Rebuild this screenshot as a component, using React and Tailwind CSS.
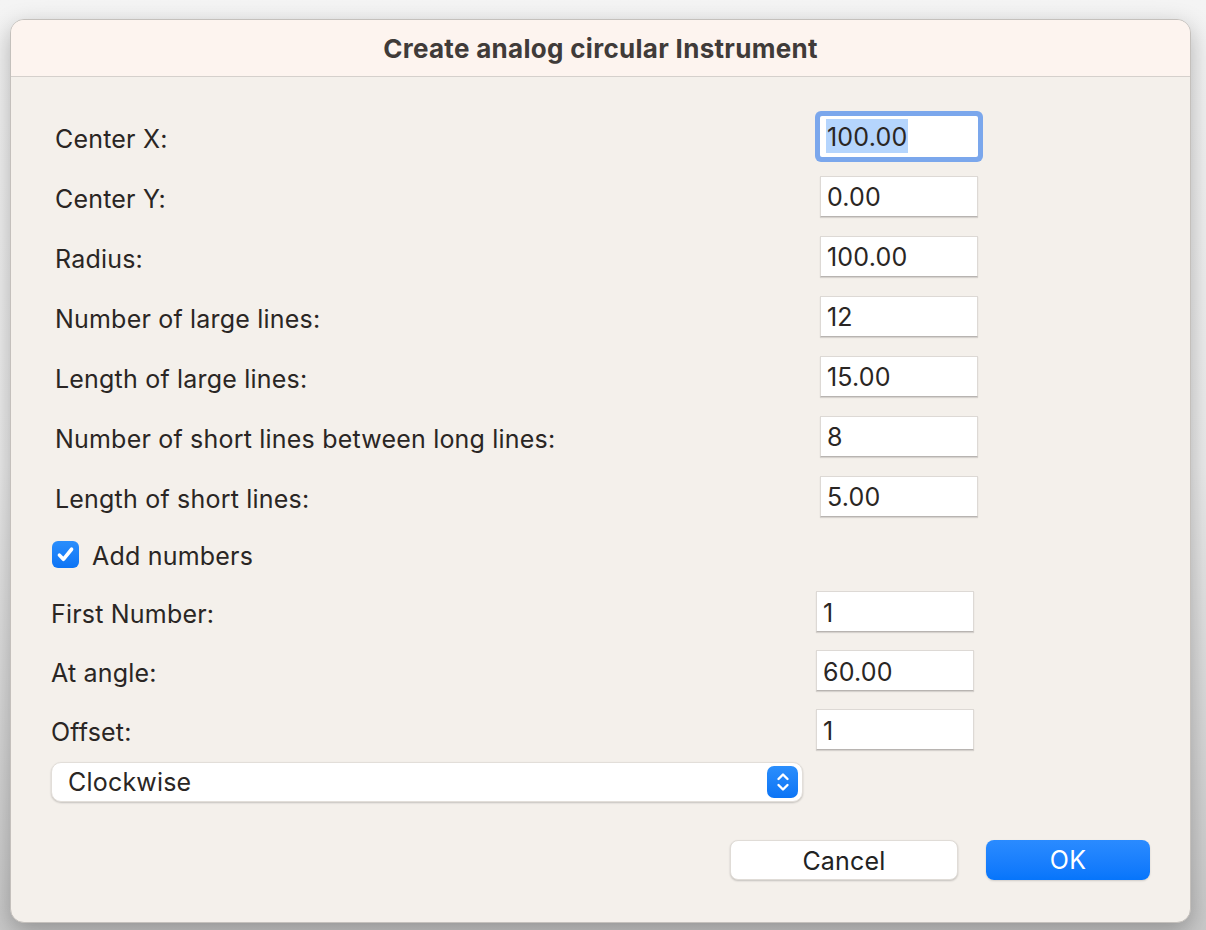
import React from "react";

const topRows = [
  ["Center X:", "100.00"],
  ["Center Y:", "0.00"],
  ["Radius:", "100.00"],
  ["Number of large lines:", "12"],
  ["Length of large lines:", "15.00"],
  ["Number of short lines between long lines:", "8"],
  ["Length of short lines:", "5.00"],
];

const numberRows = [
  ["First Number:", "1"],
  ["At angle:", "60.00"],
  ["Offset:", "1"],
];

function Field({ value, focused }) {
  if (focused) {
    return (
      <div className="flex h-[41px] w-[158px] items-center rounded-[2px] bg-white pl-[6px] shadow-[0_0_0_5px_#7ba7ec]">
        <span className="bg-[#b5d5fd] px-[1px] pt-[3px] leading-[31px]">{value}</span>
      </div>
    );
  }
  return (
    <div className="flex h-[41px] w-[158px] items-center border border-[#ddd9d5] border-b-[#b8b4b1] bg-white pl-[6px] pt-[4px] shadow-[0_1px_1px_rgba(0,0,0,0.12)]">
      {value}
    </div>
  );
}

function Row({ label, value, focused, h, inputX }) {
  return (
    <div className={`flex items-center justify-between ${h}`}>
      <span className="pt-[7px]">{label}</span>
      <div className={inputX}>
        <Field value={value} focused={focused} />
      </div>
    </div>
  );
}

function Checkbox() {
  return (
    <div className="flex h-[27px] w-[27px] items-center justify-center rounded-[6px] bg-gradient-to-b from-[#2a8efc] to-[#0c74f5]">
      <svg width="21" height="21" viewBox="0 0 20 20" fill="none">
        <path d="M4.2 10.6l3.8 4L15.8 5" stroke="white" strokeWidth="3.4" strokeLinecap="round" strokeLinejoin="round" />
      </svg>
    </div>
  );
}

function Stepper() {
  return (
    <div className="flex h-[32px] w-[31px] items-center justify-center rounded-[7px] bg-gradient-to-b from-[#2a8efc] to-[#0b74f5]">
      <svg width="16" height="24" viewBox="0 0 16 24" fill="none">
        <path d="M3.5 9l4.5-4.5L12.5 9" stroke="white" strokeWidth="2.4" strokeLinecap="round" strokeLinejoin="round" />
        <path d="M3.5 15l4.5 4.5 4.5-4.5" stroke="white" strokeWidth="2.4" strokeLinecap="round" strokeLinejoin="round" />
      </svg>
    </div>
  );
}

export default function App() {
  return (
    <div
      className="h-[930px] w-[1206px] overflow-hidden bg-gradient-to-b from-[#f4f4f4] via-[#ececec] to-[#c9c9c9] pl-[10px] pt-[19px] text-[25px] tracking-[0.2px] text-[#2a2624]"
      style={{ fontFamily: "Inter, 'Liberation Sans', sans-serif" }}
    >
      <div className="flex h-[904px] w-[1181px] flex-col overflow-hidden rounded-[14px] border border-[#c4c0bc] bg-[#f4f0eb] shadow-[0_8px_24px_rgba(0,0,0,0.28)]">
        <div className="flex h-[57px] shrink-0 items-center justify-center border-b border-[#d5d0cc] bg-[#fdf4ef]">
          <h1 className="text-[26px] font-bold tracking-[0.3px] text-[#403b39]">Create analog circular Instrument</h1>
        </div>

        <div className="flex flex-col pl-[44px] pr-[40px] pt-[29px]">
          {topRows.map(([label, value], i) => (
            <Row key={label} label={label} value={value} focused={i === 0} h="h-[60px]" inputX="mr-[172px]" />
          ))}
        </div>

        <div className="flex flex-col pl-[40px] pr-[40px]">
          <div className="flex h-[56px] items-center gap-[13px] pl-[1px]">
            <Checkbox />
            <span className="pt-[5px]">Add numbers</span>
          </div>
          {numberRows.map(([label, value]) => (
            <Row key={label} label={label} value={value} h="h-[59px]" inputX="mr-[176px]" />
          ))}

          <div className="mt-[3px] flex h-[40px] w-[752px] items-center justify-between rounded-[10px] border border-[#e2ded9] bg-white pl-[16px] pr-[4px] shadow-[0_1px_2px_rgba(0,0,0,0.2)]">
            <span className="pt-[2px]">Clockwise</span>
            <Stepper />
          </div>

          <div className="mt-[38px] flex justify-end gap-[28px]">
            <button className="h-[40px] w-[228px] rounded-[8px] border border-[#e0dcd7] bg-white pt-[2px] text-[25px] text-[#222] shadow-[0_1px_2px_rgba(0,0,0,0.2)]">
              Cancel
            </button>
            <button className="h-[40px] w-[164px] rounded-[8px] bg-gradient-to-b from-[#2a8bff] to-[#0675fb] pt-[2px] text-[25px] text-white shadow-[0_1px_2px_rgba(0,0,0,0.15)]">
              OK
            </button>
          </div>
        </div>
      </div>
    </div>
  );
}
